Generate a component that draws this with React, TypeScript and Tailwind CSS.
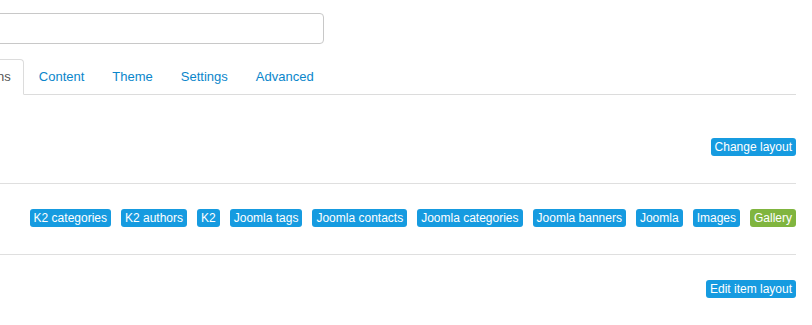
const TABS = ['Content', 'Theme', 'Settings', 'Advanced']

const SOURCES = [
    { label: 'K2 categories' },
    { label: 'K2 authors' },
    { label: 'K2' },
    { label: 'Joomla tags' },
    { label: 'Joomla contacts' },
    { label: 'Joomla categories' },
    { label: 'Joomla banners' },
    { label: 'Joomla' },
    { label: 'Images' },
    { label: 'Gallery', active: true },
]

function Badge({ label, active }: { label: string; active?: boolean }) {
    return (
        <span
            className={`inline-flex items-center h-[18px] px-[4px] rounded-[3px] text-[12px] leading-none text-white ${active ? 'bg-[#80b53f]' : 'bg-[#169be0]'
                }`}
        >
            {label}
        </span>
    )
}

export default function App() {
    return (
        <div
            className="w-[812px] h-[325px] overflow-hidden bg-white"
            style={{ fontFamily: '"Liberation Sans", Arial, Helvetica, sans-serif' }}
        >
            <div className="w-[796px] flex flex-col">
                {/* Title input */}
                <input
                    type="text"
                    className="mt-[13px] -ml-[20px] w-[344px] h-[31px] border border-[#c8c8c8] rounded-[4px] bg-white outline-none"
                />

                {/* Tabs */}
                <ul className="mt-[15px] -ml-[47px] flex border-b border-[#dcdcdc] h-[36px]">
                    <li className="mr-[2px] -mb-px h-[36px] flex items-center px-3 border border-[#dcdcdc] border-b-white bg-white rounded-t-[4px] text-[13px] text-[#555]">
                        Options
                    </li>
                    {TABS.map((tab) => (
                        <li
                            key={tab}
                            className="mr-[2px] h-[35px] flex items-center px-3 border border-transparent text-[13px] text-[#0a86cb]"
                        >
                            {tab}
                        </li>
                    ))}
                </ul>

                {/* Layout */}
                <div className="mt-[43px] flex justify-end">
                    <Badge label="Change layout" />
                </div>

                <div className="mt-[27px] border-t border-[#dfdfdf]" />

                {/* Sources */}
                <div className="mt-[25px] flex justify-end gap-[10px]">
                    {SOURCES.map((s) => (
                        <Badge key={s.label} label={s.label} active={s.active} />
                    ))}
                </div>

                <div className="mt-[27px] border-t border-[#dfdfdf]" />

                {/* Item layout */}
                <div className="mt-[25px] flex justify-end">
                    <Badge label="Edit item layout" />
                </div>
            </div>
        </div>
    )
}
